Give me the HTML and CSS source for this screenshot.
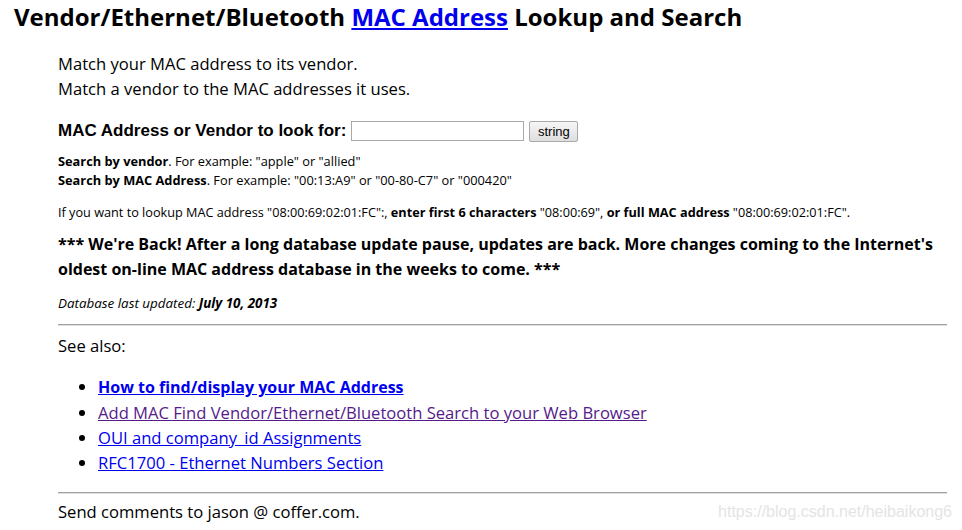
FILE: index.html
```html
<!DOCTYPE html>
<html>
<head>
<meta charset="utf-8">
<title>MAC Address Lookup</title>
<link rel="stylesheet" href="styles.css">
</head>
<body>
<h1 class="title">Vendor/Ethernet/Bluetooth <a href="#" class="lnk">MAC Address</a> Lookup and Search</h1>
<div class="content">
  <p class="intro">Match your MAC address to its vendor.<br>Match a vendor to the MAC addresses it uses.</p>
  <form class="search">
    <label class="lbl">MAC Address or Vendor to look for:</label>
    <input class="field" type="text">
    <button class="btn" type="button">string</button>
  </form>
  <p class="examples"><b>Search by vendor</b>. For example: "apple" or "allied"<br><b>Search by MAC Address</b>. For example: "00:13:A9" or "00-80-C7" or "000420"</p>
  <p class="hint">If you want to lookup MAC address "08:00:69:02:01:FC":, <b>enter first 6 characters</b> "08:00:69", <b>or full MAC address</b> "08:00:69:02:01:FC".</p>
  <p class="news">*** We're Back! After a long database update pause, updates are back. More changes coming to the Internet's oldest on-line MAC address database in the weeks to come. ***</p>
  <p class="updated">Database last updated: <b>July 10, 2013</b></p>
  <hr class="rule">
  <p class="see">See also:</p>
  <ul class="links">
    <li><a href="#" class="lnk strong">How to find/display your MAC Address</a></li>
    <li><a href="#" class="lnk visited">Add MAC Find Vendor/Ethernet/Bluetooth Search to your Web Browser</a></li>
    <li><a href="#" class="lnk">OUI and company_id Assignments</a></li>
    <li><a href="#" class="lnk">RFC1700 - Ethernet Numbers Section</a></li>
  </ul>
  <hr class="rule rule-end">
  <p class="footer">Send comments to jason @ coffer.com.</p>
</div>
<div class="watermark">https://blog.csdn.net/heibaikong6</div>
</body>
</html>
```
FILE: styles.css
```css
html, body { margin: 0; padding: 0; background: #fff; }
body {
  font-family: "Open Sans", "Liberation Sans", sans-serif;
  color: #000;
  padding: 0 15px 0 14px;
  position: relative;
  height: 530px;
  overflow: hidden;
}
.title {
  font-size: 24px;
  font-weight: bold;
  margin: 0;
  padding-top: 0;
  line-height: 33px;
}
.lnk { color: #0000ee; text-decoration: underline; }
.visited { color: #551a8b; }
.strong { font-weight: bold; font-size: 16px; }
.content { margin-left: 44px; }
.intro { font-size: 16.6px; line-height: 25px; margin: 18px 0 0 0; }
.search { display: flex; align-items: center; margin-top: 19px; height: 22px; }
.lbl { font-family: "Liberation Sans", Arial, sans-serif; font-weight: bold; font-size: 17px; margin-right: 5px; }
.field { width: 167px; height: 14px; padding: 2px; border: 1px solid #a9a9a9; margin: 0 5px 0 0; }
.btn { font-family: "Liberation Sans", Arial, sans-serif; font-size: 13px; height: 21px; width: 49px; padding: 0; border: 1px solid #a9a9a9; border-radius: 2px; background: linear-gradient(#f6f6f6, #dedede); color: #000; }
.examples { font-size: 12.8px; line-height: 19px; margin: 10px 0 0 0; }
.hint { font-size: 12.7px; line-height: 14px; margin: 15px 0 0 0; }
.news { font-size: 16px; font-weight: bold; line-height: 25px; margin: 13px 0 0 0; }
.updated { font-size: 13.4px; font-style: italic; margin: 13px 0 0 0; line-height: 16px; }
.rule { border: 0; border-top: 1px solid #a0a0a0; border-bottom: 1px solid #e0e0e0; margin: 13px 0 0 0; height: 0; }
.rule-end { margin-top: 17px; }
.see { font-size: 16.6px; line-height: 20px; margin: 10px 0 0 0; }
.links { margin: 18px 0 0 0; padding-left: 40px; font-size: 16.6px; line-height: 25px; }
.footer { font-size: 16.6px; line-height: 20px; margin: 8px 0 0 0; }
.watermark { position: absolute; right: 10px; top: 503px; font-family: "Liberation Sans", Arial, sans-serif; font-size: 16px; color: #e4e4e4; }
```
